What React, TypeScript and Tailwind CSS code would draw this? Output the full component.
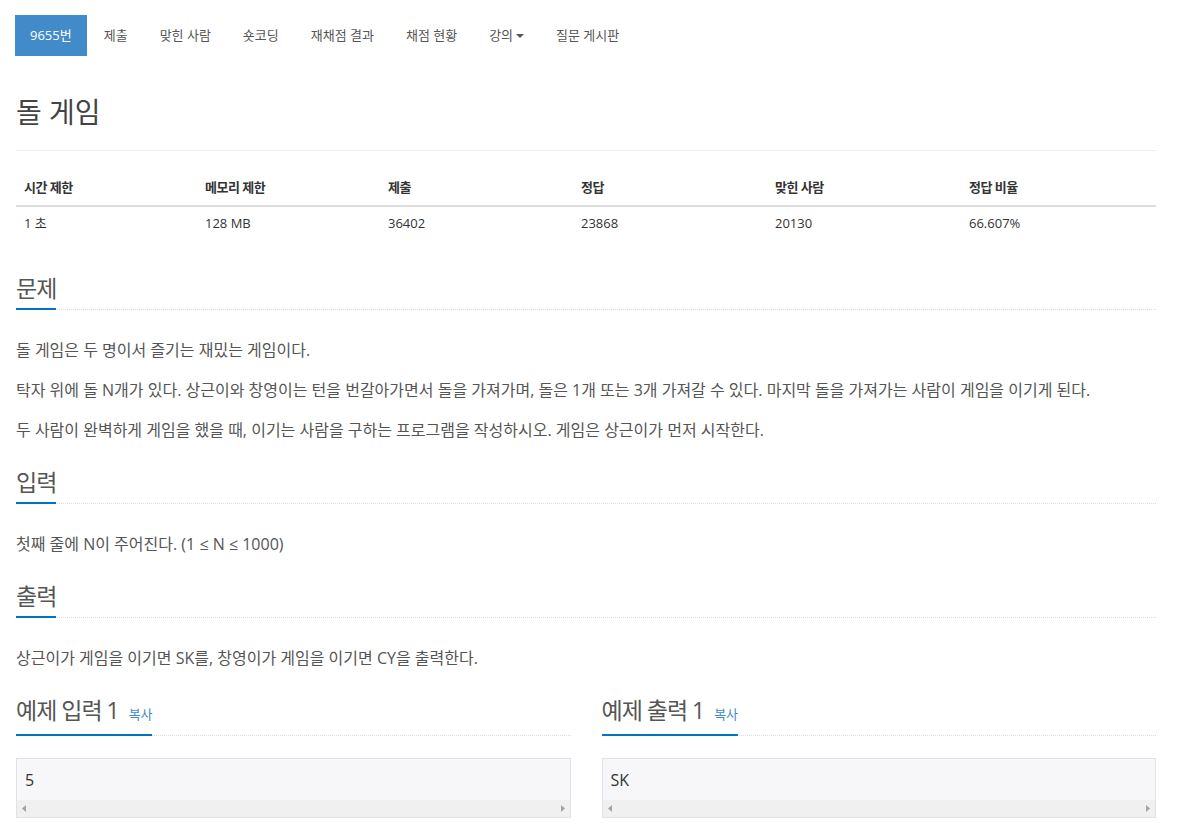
import React from "react";

// Types
type Stat = {
	label: string;
	value: string;
};

type HeadlineProps = {
	title: string;
	copy?: boolean;
};

const NAV_ITEMS = ["제출", "맞힌 사람", "숏코딩", "재채점 결과", "채점 현황", "강의", "질문 게시판"];

const STATS: Stat[] = [
	{ label: "시간 제한", value: "1 초" },
	{ label: "메모리 제한", value: "128 MB" },
	{ label: "제출", value: "36402" },
	{ label: "정답", value: "23868" },
	{ label: "맞힌 사람", value: "20130" },
	{ label: "정답 비율", value: "66.607%" },
];

const FONT = "font-['Open_Sans','Noto_Sans_CJK_KR',sans-serif]";

const Headline = (props: HeadlineProps) => {
	const { title, copy } = props;

	return (
		<div className="flex border-b border-dotted border-[#dddddd]">
			<h2 className="-mb-px flex items-baseline gap-[10px] border-b-2 border-[#0076c0] pb-[4px] text-[23px] leading-[32px] font-normal tracking-[-1px] text-[#555555]">
				<span>{title}</span>
				{copy && <span className="text-[13px] tracking-[-0.2px] text-[#428bca]">복사</span>}
			</h2>
		</div>
	);
};

const SampleBox = ({ text }: { text: string }) => {
	return (
		<div className="mt-[22px] border border-[#e1e1e8] bg-[#f7f7f9]">
			<div className="px-[8px] pt-[10px] pb-[9px] text-[16px] leading-[22px] text-[#333333]">{text}</div>
			{/* <FakeScrollbar> */}
			<div className="flex h-[17px] items-center justify-between bg-[#f0f0f0] px-[5px]">
				<svg width="4" height="7" viewBox="0 0 4 7">
					<path d="M4 0 L0 3.5 L4 7 Z" fill="#a3a3a3" />
				</svg>
				<svg width="4" height="7" viewBox="0 0 4 7">
					<path d="M0 0 L4 3.5 L0 7 Z" fill="#a3a3a3" />
				</svg>
			</div>
		</div>
	);
};

const App = () => {
	return (
		<div className={`${FONT} min-h-screen bg-white pt-[15px] pb-10 pl-4 text-[#333333]`}>
			<div className="w-[1140px]">
				{/* <Nav> */}
				<ul className="-ml-px flex items-center text-[13px]">
					<li className="flex h-[41px] items-center bg-[#428bca] px-[15px] text-white">9655번</li>
					{NAV_ITEMS.map((item) => (
						<li key={item} className="ml-[2px] flex h-[41px] items-center px-[15px] text-[#555555]">
							{item}
							{item === "강의" && (
								<svg className="ml-[3px]" width="8" height="4" viewBox="0 0 8 4">
									<path d="M0 0 L8 0 L4 4 Z" fill="#555555" />
								</svg>
							)}
						</li>
					))}
				</ul>

				{/* <Title> */}
				<div className="mt-[36px] border-b border-[#eeeeee] pb-[18px]">
					<h1 className="text-[28px] leading-[40px] font-normal text-[#444444]">돌 게임</h1>
				</div>

				{/* <Stats> */}
				<div className="mt-[18px] text-[13px]">
					<div className="grid grid-cols-[181px_183px_193px_194px_194px_1fr] border-b-2 border-[#dddddd] font-bold tracking-[-0.5px]">
						{STATS.map((stat) => (
							<div key={stat.label} className="px-[8px] py-[8px] leading-[20px]">
								{stat.label}
							</div>
						))}
					</div>
					<div className="grid grid-cols-[181px_183px_193px_194px_194px_1fr]">
						{STATS.map((stat) => (
							<div key={stat.label} className="px-[8px] pt-[6px] pb-[8px] leading-[20px]">
								{stat.value}
							</div>
						))}
					</div>
				</div>

				{/* <Description> */}
				<section className="mt-[31px]">
					<Headline title="문제" />
					<div className="mt-[29px] flex flex-col gap-[18px] text-[16px] leading-[22px] text-[#555555]">
						<p>돌 게임은 두 명이서 즐기는 재밌는 게임이다.</p>
						<p>
							탁자 위에 돌 N개가 있다. 상근이와 창영이는 턴을 번갈아가면서 돌을 가져가며, 돌은 1개 또는 3개 가져갈 수 있다. 마지막 돌을
							가져가는 사람이 게임을 이기게 된다.
						</p>
						<p>두 사람이 완벽하게 게임을 했을 때, 이기는 사람을 구하는 프로그램을 작성하시오. 게임은 상근이가 먼저 시작한다.</p>
					</div>
				</section>

				{/* <Input> */}
				<section className="mt-[25px]">
					<Headline title="입력" />
					<p className="mt-[29px] text-[16px] leading-[22px] text-[#555555]">첫째 줄에 N이 주어진다. (1 ≤ N ≤ 1000)</p>
				</section>

				{/* <Output> */}
				<section className="mt-[25px]">
					<Headline title="출력" />
					<p className="mt-[29px] text-[16px] leading-[22px] text-[#555555]">
						상근이가 게임을 이기면 SK를, 창영이가 게임을 이기면 CY을 출력한다.
					</p>
				</section>

				{/* <Samples> */}
				<div className="mt-[25px] grid grid-cols-2 gap-[31px]">
					<section>
						<Headline title="예제 입력 1" copy />
						<SampleBox text="5" />
					</section>
					<section>
						<Headline title="예제 출력 1" copy />
						<SampleBox text="SK" />
					</section>
				</div>
			</div>
		</div>
	);
};

export default App;
